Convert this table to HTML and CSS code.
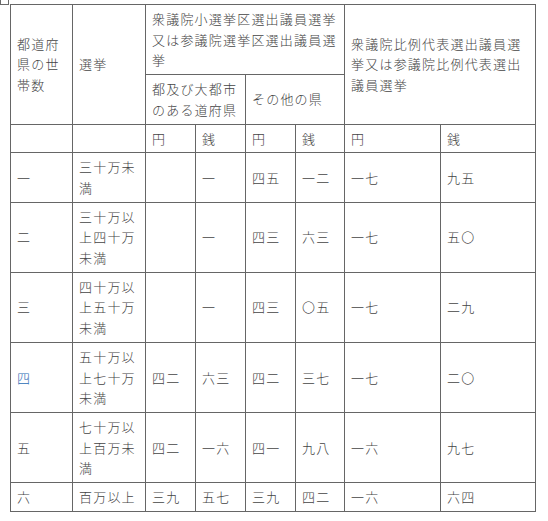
FILE: index.html
```html
<!DOCTYPE html>
<html lang="ja">
<head>
<meta charset="utf-8">
<link rel="stylesheet" href="styles.css">
</head>
<body>
<div class="page">
  <span class="broken-img"></span>
  <table class="tbl">
    <colgroup>
      <col class="c1"><col class="c2"><col class="c3"><col class="c4"><col class="c5"><col class="c6"><col class="c7"><col class="c8">
    </colgroup>
    <tr>
      <td rowspan="2">都道府県の世帯数</td>
      <td rowspan="2">選挙</td>
      <td colspan="4">衆議院小選挙区選出議員選挙又は参議院選挙区選出議員選挙</td>
      <td colspan="2" rowspan="2">衆議院比例代表選出議員選挙又は参議院比例代表選出議員選挙</td>
    </tr>
    <tr>
      <td colspan="2">都及び大都市のある道府県</td>
      <td colspan="2">その他の県</td>
    </tr>
    <tr>
      <td></td><td></td><td>円</td><td>銭</td><td>円</td><td>銭</td><td>円</td><td>銭</td>
    </tr>
    <tr>
      <td>一</td><td>三十万未満</td><td></td><td>一</td><td>四五</td><td>一二</td><td>一七</td><td>九五</td>
    </tr>
    <tr>
      <td>二</td><td>三十万以上四十万未満</td><td></td><td>一</td><td>四三</td><td>六三</td><td>一七</td><td>五〇</td>
    </tr>
    <tr>
      <td>三</td><td>四十万以上五十万未満</td><td></td><td>一</td><td>四三</td><td>〇五</td><td>一七</td><td>二九</td>
    </tr>
    <tr>
      <td class="blue">四</td><td>五十万以上七十万未満</td><td>四二</td><td>六三</td><td>四二</td><td>三七</td><td>一七</td><td>二〇</td>
    </tr>
    <tr>
      <td>五</td><td>七十万以上百万未満</td><td>四二</td><td>一六</td><td>四一</td><td>九八</td><td>一六</td><td>九七</td>
    </tr>
    <tr>
      <td>六</td><td>百万以上</td><td>三九</td><td>五七</td><td>三九</td><td>四二</td><td>一六</td><td>六四</td>
    </tr>
  </table>
</div>
</body>
</html>
```

FILE: styles.css
```css
html, body {
  margin: 0;
  padding: 0;
  background: #ffffff;
}
.page {
  position: relative;
  padding: 4px 0 0 10px;
}
.broken-img {
  position: absolute;
  left: 0;
  top: -4px;
  width: 7px;
  height: 7px;
  border: 1px solid #6a6a6a;
  box-sizing: content-box;
}
.tbl {
  border-collapse: collapse;
  table-layout: fixed;
  width: 526px;
  font-family: "Noto Sans CJK JP", "Noto Sans", sans-serif;
  font-size: 13px;
  font-weight: 300;
  letter-spacing: 1.2px;
  line-height: 20.7px;
  color: #444444;
}
.tbl td {
  border: 1px solid #666666;
  padding: 4px 5px 3px 6px;
  vertical-align: middle;
  text-align: left;
  word-break: break-all;
}
.c1 { width: 62px; }
.c2 { width: 73px; }
.c3 { width: 50px; }
.c4 { width: 50px; }
.c5 { width: 50px; }
.c6 { width: 49px; }
.c7 { width: 96px; }
.c8 { width: 95px; }
.blue { color: #2a6cb5; }
```
